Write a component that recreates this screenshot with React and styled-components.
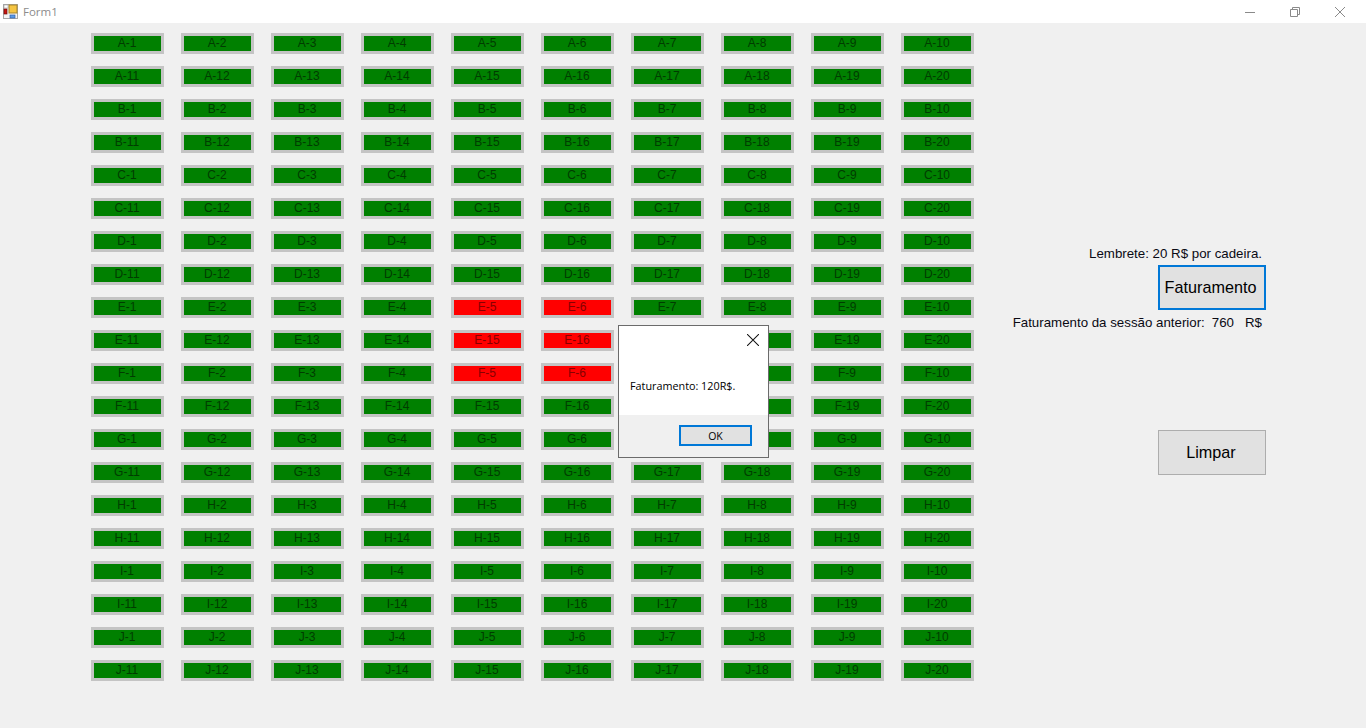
import React from "react";
import styled, { createGlobalStyle } from "styled-components";

const GlobalStyle = createGlobalStyle`
  html, body {
    margin: 0;
    padding: 0;
    height: 100%;
    background: #f0f0f0;
    overflow: hidden;
  }
`;

const Window = styled.div`
  position: relative;
  width: 1366px;
  height: 728px;
  background: #f0f0f0;
  font-family: "Liberation Sans", Arial, sans-serif;
  color: #000;
`;

const TitleBar = styled.div`
  display: flex;
  align-items: center;
  height: 23px;
  background: #fff;
  padding: 0 3px 0 3px;
`;

const TitleText = styled.span`
  margin-left: 5px;
  font-family: "Open Sans", sans-serif;
  font-size: 11.5px;
  color: #8c8c8c;
`;

const WindowControls = styled.div`
  display: flex;
  margin-left: auto;
`;

const ControlButton = styled.div`
  display: flex;
  align-items: center;
  justify-content: center;
  width: ${props => props.$width || 45}px;
  height: 23px;
`;

const Body = styled.div`
  display: flex;
  padding: 10px 100px 0 91px;
`;

const SeatGrid = styled.div`
  display: grid;
  grid-template-columns: repeat(10, 73px);
  grid-auto-rows: 21px;
  column-gap: 17px;
  row-gap: 12px;
`;

const Seat = styled.button`
  box-sizing: border-box;
  width: 73px;
  height: 21px;
  padding: 0 1px 0 0;
  border: 3px solid #c4c4c4;
  background: ${props => (props.$taken ? "#ff0000" : "#008000")};
  color: ${props => (props.$taken ? "#860000" : "#003c00")};
  font-family: "Liberation Sans", Arial, sans-serif;
  font-size: 12px;
  line-height: 15px;
  text-align: center;
`;

const SidePanel = styled.div`
  flex: 1;
  display: flex;
  flex-direction: column;
  align-items: flex-end;
  padding-top: 212px;
`;

const InfoLabel = styled.div`
  display: flex;
  margin-right: 4px;
  margin-top: ${props => props.$top || 0}px;
  font-size: 13.3px;
  line-height: 18px;
  color: #0a0a14;
  white-space: pre;
`;

const InfoValue = styled.span`
  margin-left: ${props => props.$gap}px;
`;

const ActionButton = styled.button`
  box-sizing: border-box;
  width: 108px;
  height: 45px;
  padding: 0 ${props => (props.$focused ? 3 : 2)}px 0 0;
  margin-top: ${props => props.$top || 0}px;
  background: #e1e1e1;
  border: ${props => (props.$focused ? "2px solid #0078d7" : "1px solid #adadad")};
  font-family: "Liberation Sans", Arial, sans-serif;
  font-size: 16.2px;
  color: #000;
`;

const Dialog = styled.div`
  position: absolute;
  left: 618px;
  top: 325px;
  box-sizing: border-box;
  width: 151px;
  height: 133px;
  display: flex;
  flex-direction: column;
  border: 1px solid #6b6b6b;
  background: #fff;
`;

const DialogBody = styled.div`
  flex: 1;
  display: flex;
  flex-direction: column;
  padding: 8px 9px 0 11px;
`;

const DialogClose = styled.div`
  display: flex;
  justify-content: flex-end;
`;

const DialogMessage = styled.div`
  margin-top: 32px;
  font-family: "Open Sans", sans-serif;
  font-size: 10.8px;
  line-height: 16px;
  color: #000;
`;

const DialogFooter = styled.div`
  display: flex;
  justify-content: flex-end;
  height: 42px;
  padding: 10px 16px 0 0;
  box-sizing: border-box;
  background: #f0f0f0;
`;

const DialogButton = styled.button`
  box-sizing: border-box;
  width: 73px;
  height: 21px;
  padding: 0;
  background: #e1e1e1;
  border: 2px solid #0078d7;
  font-family: "Open Sans", sans-serif;
  font-size: 10.5px;
  color: #000;
`;

const FormIcon = () => (
  <svg width="15" height="15" viewBox="0 0 15 15">
    <rect x="0.5" y="0.5" width="14" height="14" fill="#f4f4f4" stroke="#a8a8a8" />
    <rect x="1" y="1" width="4" height="3" fill="#fff" stroke="#999" strokeWidth="0.5" />
    <rect x="1" y="5" width="3" height="5" fill="#c8140f" stroke="#6e0d0d" strokeWidth="0.7" />
    <rect x="6" y="1" width="8" height="8" fill="#f5c542" stroke="#a5832a" />
    <rect x="7" y="11" width="5" height="3" fill="#5b9bea" stroke="#2f5fa8" strokeWidth="0.7" />
  </svg>
);

const MinimizeIcon = () => (
  <svg width="10" height="10" viewBox="0 0 10 10">
    <path d="M0 5.5H10" stroke="#8a8a8a" strokeWidth="1" />
  </svg>
);

const RestoreIcon = () => (
  <svg width="10" height="10" viewBox="0 0 10 10" fill="none" stroke="#8a8a8a">
    <path d="M0.5 2.5H7.5V9.5H0.5Z" />
    <path d="M2.5 2.5V0.5H9.5V7.5H7.5" />
  </svg>
);

const CloseIcon = ({ size = 10, color = "#8a8a8a" }) => (
  <svg width={size} height={size} viewBox="0 0 10 10" fill="none" stroke={color} strokeWidth={size > 10 ? 0.85 : 1}>
    <path d="M0 0L10 10M10 0L0 10" />
  </svg>
);

const takenSeats = ["E-5", "E-6", "E-15", "E-16", "F-5", "F-6"];

const seats = [];
"ABCDEFGHIJ".split("").forEach(row => {
  for (let n = 1; n <= 20; n++) seats.push(`${row}-${n}`);
});

const App = () => {
  return (
    <Window>
      <GlobalStyle />
      <TitleBar>
        <FormIcon />
        <TitleText>Form1</TitleText>
        <WindowControls>
          <ControlButton><MinimizeIcon /></ControlButton>
          <ControlButton><RestoreIcon /></ControlButton>
          <ControlButton $width={46}><CloseIcon /></ControlButton>
        </WindowControls>
      </TitleBar>

      <Body>
        <SeatGrid>
          {seats.map(seat => (
            <Seat key={seat} $taken={takenSeats.includes(seat)}>{seat}</Seat>
          ))}
        </SeatGrid>
        <SidePanel>
          <InfoLabel>Lembrete: 20 R$ por cadeira.</InfoLabel>
          <ActionButton $focused $top={2}>Faturamento</ActionButton>
          <InfoLabel $top={4}>
            Faturamento da sessão anterior:
            <InfoValue $gap={7}>760</InfoValue>
            <InfoValue $gap={11}>R$</InfoValue>
          </InfoLabel>
          <ActionButton $top={98}>Limpar</ActionButton>
        </SidePanel>
      </Body>

      <Dialog>
        <DialogBody>
          <DialogClose><CloseIcon size={12} color="#111" /></DialogClose>
          <DialogMessage>Faturamento: 120R$.</DialogMessage>
        </DialogBody>
        <DialogFooter>
          <DialogButton>OK</DialogButton>
        </DialogFooter>
      </Dialog>
    </Window>
  );
};

export default App;
